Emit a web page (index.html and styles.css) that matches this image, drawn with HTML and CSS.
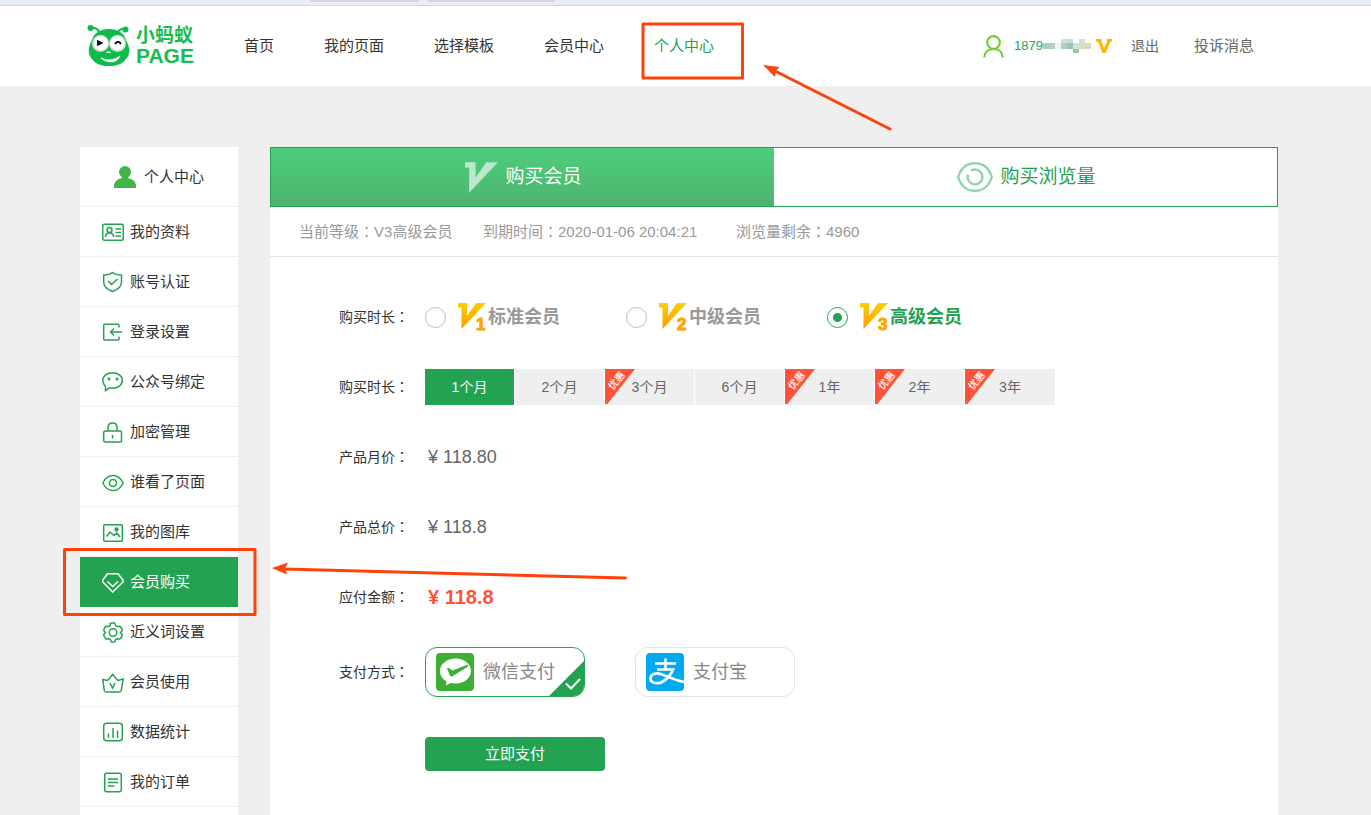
FILE: index.html
```html
<!DOCTYPE html>
<html lang="zh-CN">
<head>
<meta charset="utf-8">
<title>购买会员</title>
<link rel="stylesheet" href="styles.css">
</head>
<body>
<svg class="defs" width="0" height="0" aria-hidden="true">
  <defs>
    <linearGradient id="gold" x1="0" y1="0" x2="0" y2="1"><stop offset="0" stop-color="#fbd000"/><stop offset="1" stop-color="#fd9c00"/></linearGradient>
    <symbol id="vmark" viewBox="0 0 28 26"><path d="M0 0H9V13L18 0H28L3.500 26V4.500H0Z"/></symbol>
  </defs>
</svg>
<div class="strip"><span></span><span></span></div>
<header class="header">
  <a class="logo" href="#">
    <svg width="45" height="42" viewBox="0 0 45 42" aria-hidden="true">
      <path d="M4 3Q11 2 13 9M39 4Q32 3 30 9" fill="none" stroke="#0dbb49" stroke-width="2"/>
      <circle cx="3.500" cy="3" r="3" fill="#0dbb49"/><circle cx="38.500" cy="4.500" r="3" fill="#0dbb49"/>
      <path d="M22 4C31 4 37 8 39 15C43 22 44 30 38 35C33 43 11 43 6 35C0 30 1 22 5 15C7 8 13 4 22 4Z" fill="#0dbb49"/>
      <circle cx="13.500" cy="18.500" r="8.500" fill="#d5ddd7"/><circle cx="30.500" cy="18.500" r="8.500" fill="#d5ddd7"/>
      <circle cx="14" cy="18" r="7.200" fill="#fff"/><circle cx="30.500" cy="18" r="7.200" fill="#fff"/>
      <path d="M10.500 15.500L15.500 18L10.500 20.500Z" fill="#111" stroke="#111"/>
      <path d="M28 19Q31 14.500 34 19" fill="none" stroke="#111" stroke-width="2"/>
      <path d="M19.500 28Q21.500 26 23.500 28" fill="none" stroke="#eafbef" stroke-width="1.500"/>
      <path d="M14 33Q24 38 33 31Q30 38 21 36.500Q17 36 14 33Z" fill="#fff" stroke="#fff"/>
    </svg>
    <span class="logo-text"><span>小蚂蚁</span><span class="logo-latin">PAGE</span></span>
  </a>
  <nav class="nav">
    <a href="#">首页</a><a href="#">我的页面</a><a href="#">选择模板</a><a href="#">会员中心</a><a class="current" href="#">个人中心</a>
  </nav>
  <div class="account">
    <svg width="21" height="23" viewBox="0 0 21 23" fill="none" stroke="#6fce3a" stroke-width="2.200" aria-hidden="true"><circle cx="10.500" cy="7.500" r="6.300"/><path d="M1.200 22.500C1.500 17 5.500 14 10.500 14S19.500 17 19.800 22.500"/></svg>
    <a class="phone" href="#">1879</a>
    <svg class="mosaic" width="48" height="14" viewBox="0 0 48 14" aria-hidden="true">
      <path fill="#a9d1bd" d="M0 4h6v6h-6zM18 4h6v6h-6z"/><path fill="#b9cfbe" d="M6 4h6v6h-6z"/><path fill="#f0f5fa" d="M12 4h6v6h-6z"/>
      <path fill="#cfe3d0" d="M18 0h6v4h-6zM36 0h6v4h-6zM30 4h6v6h-6z"/><path fill="#bfe0dc" d="M24 0h6v4h-6z"/><path fill="#93c6b0" d="M24 4h6v6h-6zM30 10h6v4h-6z"/><path fill="#d9e2bf" d="M36 4h6v6h-6z"/><path fill="#cddfc4" d="M42 4h6v6h-6z"/>
    </svg>
    <svg class="v-badge" width="16" height="14" viewBox="0 0 16 14" fill="#ffb400" aria-hidden="true"><path d="M0 0H5.500V3L8 9L11 3V0H16V2.500H14.500L9.500 14H6.500L2 2.500H0Z"/></svg>
    <a class="logout" href="#">退出</a>
    <a class="messages" href="#">投诉消息</a>
  </div>
</header>

<div class="page">
  <aside class="sidebar">
    <h2 class="side-title">
      <svg width="22" height="22" viewBox="0 0 22 22" fill="#43b548" aria-hidden="true"><ellipse cx="11" cy="6" rx="6" ry="6"/><path d="M8 10H14V12C19 13 22 16 22 20V22H0V20C0 16 3 13 8 12Z"/></svg>
      个人中心
    </h2>
    <nav class="side-nav">
      <a href="#"><svg viewBox="0 0 22 22"><rect x=".7" y="3.200" width="20.600" height="16" rx="1.500"/><circle cx="7.500" cy="9" r="2.500"/><path d="M3.500 16C3.500 13 5 12 7.500 12S11.500 13 11.500 16M13.500 8H19M13.500 11.500H19M13.500 15H19"/></svg>我的资料</a>
      <a href="#"><svg viewBox="0 0 22 22"><path d="M10.500 1.500C13 3.500 16 4 19.500 4V11C19.500 15 16 18.500 10.500 20.500C5 18.500 1.700 15 1.700 11V4C5 4 8 3.500 10.500 1.500ZM6 10L9.500 13.500L15.500 8"/></svg>账号认证</a>
      <a href="#"><svg viewBox="0 0 22 22"><path d="M17 6.500V4.200Q17 3.200 16 3.200H2.700Q1.700 3.200 1.700 4.200V18Q1.700 19 2.700 19H16Q17 19 17 18V15.500M20 11H8.500M12 7.500L8.500 11L12 14.500"/></svg>登录设置</a>
      <a href="#"><svg viewBox="0 0 22 22"><path d="M3.500 15.500C1.500 13.500.8 11.500.8 9.500C.8 5 5.200 1.800 10.500 1.800S20.300 5 20.300 9.500S16 17.200 10.500 17.200C9.300 17.200 8.500 17 7.500 16.800L3.500 19.500Z"/><circle cx="7" cy="8" r="1.500" fill="currentColor" stroke="none"/><circle cx="15" cy="8" r="1.500" fill="currentColor" stroke="none"/></svg>公众号绑定</a>
      <a href="#"><svg viewBox="0 0 22 22"><rect x="1.700" y="10" width="17.800" height="11" rx="1.500"/><path d="M6 10V6.500Q6 2 10.500 2T15 6.500V10M10.500 14V17.500"/></svg>加密管理</a>
      <a href="#"><svg viewBox="0 0 22 22"><path d="M.8 12C3 7.500 6.500 4.500 11 4.500S19 7.500 21.200 12C19 16.500 15.500 19.500 11 19.500S3 16.500 .8 12Z"/><circle cx="11" cy="12" r="3.500"/></svg>谁看了页面</a>
      <a href="#"><svg viewBox="0 0 22 22"><rect x="1.700" y="3.700" width="18.600" height="16.500" rx="1"/><path d="M4.500 15.500L8 11L12 14.500L15 12L18 16"/><circle cx="14.500" cy="8.500" r="1.400" fill="currentColor"/></svg>我的图库</a>
      <a class="active" href="#"><svg viewBox="0 0 22 22"><path d="M5.500 2.700H16L21 9V11L10.700 21L.8 11V9ZM5.500 10.500L10.700 15.500L16 10.500"/></svg>会员购买</a>
      <a href="#"><svg viewBox="0 0 22 22"><path d="M8 2.700L9.500 2H12.500L13.700 4.500L15.200 5.500L18 5.300L19.800 7.700L20.300 9.500L18.500 11.500L20.300 13.500L19.500 16.500L17.800 18L15.200 17.700L13.700 18.500L12.500 21H9.500L8.300 18.500L6.800 17.700L4 18L2.200 15.500L1.700 13.500L3.500 11.500L1.700 9.500L2.500 7L4 5.300L6.800 5.500L8.300 4.500Z"/><circle cx="11" cy="11.500" r="3.700"/></svg>近义词设置</a>
      <a href="#"><svg viewBox="0 0 22 22"><path d="M.8 8.500L5.500 9.500L10.700 3.500L16 9.500L21.200 8L19.200 19.500Q19 21 17.500 21H4Q2.500 21 2.300 19.500ZM8 12L10.500 17L13 12"/></svg>会员使用</a>
      <a href="#"><svg viewBox="0 0 22 22"><rect x="1.700" y="2.200" width="18.600" height="17.600" rx="3"/><path d="M6.500 17V12.500M11 17V7M15.500 17V9.500"/></svg>数据统计</a>
      <a href="#"><svg viewBox="0 0 22 22"><rect x="2.700" y="2.200" width="16.600" height="18.600" rx="2"/><path d="M6 8H16M6 11.500H16M6 15H12.500"/></svg>我的订单</a>
    </nav>
  </aside>

  <main class="main">
    <div class="tabs" role="tablist">
      <button class="tab selected" type="button" role="tab" aria-selected="true"><svg width="33" height="31" fill="#b9e8cb" aria-hidden="true"><use href="#vmark"/></svg>购买会员</button>
      <button class="tab" type="button" role="tab" aria-selected="false"><svg width="36" height="30" viewBox="0 0 36 30" fill="none" stroke="#93d3a9" stroke-width="2.400" aria-hidden="true"><path d="M1.200 15C4 6 10 1.200 18 1.200S32 6 34.800 15C32 24 26 28.800 18 28.800S4 24 1.200 15Z"/><path d="M14 8.700A7.400 7.400 0 1 1 11 12.500"/></svg>购买浏览量</button>
    </div>
    <div class="meta">
      <span>当前等级<span class="colon" lang="zh-TW">：</span>V3高级会员</span>
      <span>到期时间<span class="colon" lang="zh-TW">：</span>2020-01-06 20:04:21</span>
      <span>浏览量剩余<span class="colon" lang="zh-TW">：</span>4960</span>
    </div>
    <form class="form">
      <div class="row">
        <span class="label">购买时长<span class="colon" lang="zh-TW">：</span></span>
        <div class="levels">
          <label class="level"><input type="radio" name="level"><svg width="30" height="36" viewBox="0 0 30 36" fill="url(#gold)" aria-hidden="true"><use href="#vmark" y="4" width="28" height="26"/><text x="18" y="31" class="num">1</text></svg>标准会员</label>
          <label class="level"><input type="radio" name="level"><svg width="30" height="36" viewBox="0 0 30 36" fill="url(#gold)" aria-hidden="true"><use href="#vmark" y="4" width="28" height="26"/><text x="18" y="31" class="num">2</text></svg>中级会员</label>
          <label class="level"><input type="radio" name="level" checked><svg width="30" height="36" viewBox="0 0 30 36" fill="url(#gold)" aria-hidden="true"><use href="#vmark" y="4" width="28" height="26"/><text x="18" y="31" class="num">3</text></svg>高级会员</label>
        </div>
      </div>
      <div class="row">
        <span class="label">购买时长<span class="colon" lang="zh-TW">：</span></span>
        <div class="terms">
          <button class="term chosen" type="button">1个月</button>
          <button class="term" type="button">2个月</button>
          <button class="term" type="button"><span class="sale"><b>优惠</b></span>3个月</button>
          <button class="term" type="button">6个月</button>
          <button class="term" type="button"><span class="sale"><b>优惠</b></span>1年</button>
          <button class="term" type="button"><span class="sale"><b>优惠</b></span>2年</button>
          <button class="term" type="button"><span class="sale"><b>优惠</b></span>3年</button>
        </div>
      </div>
      <div class="row"><span class="label">产品月价<span class="colon" lang="zh-TW">：</span></span><span class="price">¥ 118.80</span></div>
      <div class="row"><span class="label">产品总价<span class="colon" lang="zh-TW">：</span></span><span class="price">¥ 118.8</span></div>
      <div class="row due"><span class="label">应付金额<span class="colon" lang="zh-TW">：</span></span><strong class="price total">¥ 118.8</strong></div>
      <div class="row">
        <span class="label">支付方式<span class="colon" lang="zh-TW">：</span></span>
        <div class="methods">
          <label class="method picked"><input type="radio" name="pay" checked>
            <svg width="38" height="38" viewBox="0 0 38 38" aria-hidden="true"><rect width="38" height="38" rx="4" fill="#3cb034"/><path d="M19.500 5.500C28 5.500 35 11 35 18S28 30.500 19.500 30.500C17.500 30.500 16 30.300 14.500 30L10 32.500L10.500 28.500C6.500 26 4 22.500 4 18C4 11 11 5.500 19.500 5.500Z" fill="#fff"/><path d="M11 15.500C12 13.500 13.500 15.500 16.500 17.500L32 11.500V13.500L16 23.500C14.500 24 14 22.500 13.500 21.500Z" fill="#3cb034"/></svg>
            微信支付
            <svg class="corner" width="37" height="37" viewBox="0 0 37 37" aria-hidden="true"><path d="M37 0V37H0Z" fill="#23a351"/><path d="M18 23.500L23 28.500L32 19" fill="none" stroke="#fff" stroke-width="2"/></svg>
          </label>
          <label class="method"><input type="radio" name="pay">
            <svg width="38" height="38" viewBox="0 0 38 38" aria-hidden="true"><rect width="38" height="38" rx="4" fill="#00a9f1"/><path d="M9 10.500H30M19.500 5.500V16M11 16.500H27C25 22 21 26 17 28.500C12 31.500 4.500 30.500 4.500 25.500C4.500 21 10 19.500 14.500 21C22 23.500 28 27 38 29" fill="none" stroke="#fff" stroke-width="2.700"/></svg>
            支付宝
          </label>
        </div>
      </div>
      <button class="submit" type="submit">立即支付</button>
    </form>
  </main>
</div>

<svg class="marks" width="1000" height="640" viewBox="0 0 1000 640" aria-hidden="true">
  <g fill="none" stroke="#ff4208" stroke-width="3" stroke-linejoin="round" stroke-linecap="round"><rect x="643" y="24" width="99.500" height="54"/><rect x="64.500" y="549.500" width="190.500" height="65"/><path d="M890 129L775 71M625.500 578L284 569"/></g>
  <path fill="#ff4208" d="M763 65L779.500 67L776 70.500L775 77ZM272 568L288 562.500L285 568.500L287 574.500Z"/>
</svg>
</body>
</html>
```
FILE: styles.css
```css
* { box-sizing: border-box; }
body {
  margin: 0;
  min-height: 100vh;
  display: flex;
  flex-direction: column;
  position: relative;
  background: #efefef;
  color: #333;
  font: 15px/20px "Liberation Sans", "Noto Sans CJK SC", sans-serif;
}
a { color: inherit; text-decoration: none; }
button { font: inherit; border: 0; padding: 0; cursor: pointer; }
svg { flex: none; }
.defs { position: absolute; }
.colon { font-family: "Noto Sans CJK TC", sans-serif; line-height: 1; }

.strip {
  display: flex;
  gap: 8px;
  height: 6px;
  padding-left: 310px;
  background: #e9edf6;
  border-bottom: 1px solid #ccd6ea;
}
.strip span { width: 109px; height: 2px; background: #d2d5da; border-radius: 0 0 4px 4px; }
.strip span + span { width: 128px; }

.header {
  display: flex;
  align-items: center;
  height: 80px;
  padding: 0 117px 0 87px;
  background: #fff;
}
.logo { display: flex; align-items: center; gap: 4px; width: 157px; color: #17bd50; font-weight: 700; }
.logo-text { display: grid; font-size: 19px; line-height: 20px; }
.logo-latin { font-size: 21px; }
.nav { display: flex; gap: 50px; }
.nav .current { color: #23a351; }
.account { display: flex; align-items: center; margin-left: auto; color: #666; }
.phone { margin-left: 10px; color: #23a351; font-size: 13px; }
.v-badge { margin-left: 5px; }
.logout { margin-left: 19px; font-size: 14px; }
.messages { margin-left: 35px; }

.page { flex: 1; display: flex; gap: 32px; padding: 61px 93px 0 80px; }
.sidebar { flex: none; width: 158px; background: #fff; }
.side-title {
  display: flex;
  align-items: center;
  justify-content: center;
  gap: 8px;
  height: 60px;
  margin: 0;
  border-bottom: 1px solid #efefef;
  font-size: 15px;
  font-weight: 400;
}
.side-nav a {
  display: flex;
  align-items: center;
  gap: 6px;
  height: 50px;
  padding-left: 22px;
  border-bottom: 1px solid #efefef;
}
.side-nav svg { width: 22px; height: 22px; fill: none; stroke: currentColor; stroke-width: 1.5; color: #23a351; }
.side-nav .active { background: #23a351; border-color: #23a351; color: #fff; }
.side-nav .active svg { color: #fff; }

.main { flex: 1; background: #fff; }
.tabs { display: flex; height: 60px; border: 1px solid #23a351; }
.tab {
  flex: 1;
  display: flex;
  align-items: center;
  justify-content: center;
  gap: 7px;
  padding-left: 2px;
  background: #fff;
  color: #23a351;
  font-size: 19px;
}
.tab.selected { background: linear-gradient(#4dce7b, #4fb370); color: #fff; }
.meta {
  display: grid;
  grid-template-columns: 154px 223px auto;
  gap: 30px;
  align-items: center;
  height: 50px;
  padding-left: 29px;
  border-bottom: 1px solid #e5e5e5;
  color: #999;
  white-space: nowrap;
}

.form { padding: 42px 69px 44px; }
.row { display: flex; align-items: center; min-height: 36px; margin-bottom: 34px; }
.row.due { margin-bottom: 32px; }
.label { flex: none; width: 86px; font-size: 14px; }
.levels { display: grid; grid-template-columns: repeat(3, 201px); }
.level { display: flex; align-items: center; color: #999; font-size: 18px; font-weight: 700; }
.level input {
  appearance: none;
  width: 21px;
  height: 21px;
  margin: 0 12px 0 0;
  border: 1px solid #bbb;
  border-radius: 50%;
}
.level input:checked { border-color: #23a351; background: radial-gradient(circle, #23a351 4px, #fff 5px); }
.level:has(:checked) { color: #23a351; }
.num { font: 700 17px "Liberation Sans", sans-serif; fill: #fea500; stroke: #fea500; }
.terms { display: flex; gap: 1px; }
.term { position: relative; width: 89px; height: 36px; background: #efefef; color: #666; font-size: 14px; }
.term:last-child { width: 90px; }
.term.chosen { background: #23a351; color: #fff; }
.sale {
  position: absolute;
  top: 0;
  left: 0;
  width: 30px;
  height: 35px;
  background: #ff5339;
  clip-path: polygon(0 0, 100% 0, 8% 100%, 0 100%);
  color: #fff;
}
.sale b { display: block; width: 24px; margin-top: 2px; font-size: 10px; font-weight: 500; transform: rotate(-50deg); }
.price { padding-left: 3px; color: #666; font-size: 18px; }
.total { color: #ff5339; font-size: 20px; }
.methods { display: flex; gap: 50px; }
.method {
  position: relative;
  display: flex;
  align-items: center;
  gap: 9px;
  width: 160px;
  height: 50px;
  padding-left: 10px;
  overflow: hidden;
  border: 1px solid #e2e2e2;
  border-radius: 12px;
  color: #888;
  font-size: 18px;
}
.method input { position: absolute; opacity: 0; }
.method.picked { border-color: #23a351; }
.corner { position: absolute; right: -1px; bottom: -1px; }
.submit {
  display: block;
  width: 180px;
  height: 34px;
  margin: 40px 0 0 86px;
  border-radius: 4px;
  background: #23a351;
  color: #fff;
}
.row:has(.methods) { margin-bottom: 0; }
.marks { position: absolute; top: 0; left: 0; pointer-events: none; }
```
